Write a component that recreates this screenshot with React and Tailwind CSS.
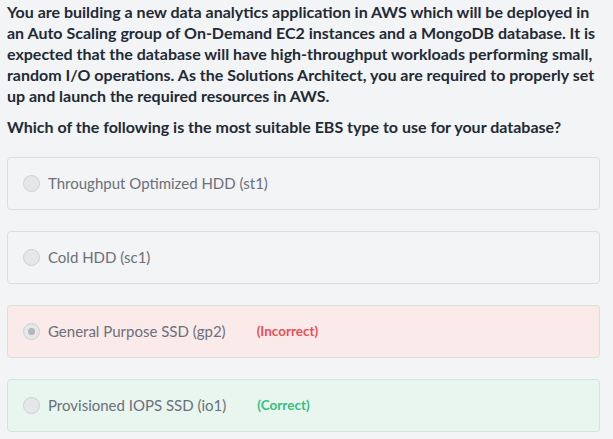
import React from "react";

const options = [
  { label: "Throughput Optimized HDD (st1)", status: null, selected: false },
  { label: "Cold HDD (sc1)", status: null, selected: false },
  { label: "General Purpose SSD (gp2)", status: "incorrect", selected: true },
  { label: "Provisioned IOPS SSD (io1)", status: "correct", selected: false },
];

const Option = ({ option }) => {
  const cardColor =
    option.status === "incorrect"
      ? "bg-[#faeaea]"
      : option.status === "correct"
      ? "bg-[#e8f6ef]"
      : "bg-[#f3f4f6]";

  return (
    <div
      className={`h-[53px] rounded-[4px] border border-[#dcdee2] ${cardColor} flex items-center pl-[15px]`}
    >
      <div className="w-[17px] h-[17px] rounded-full border border-[#cdd0d4] bg-[#e6e7e9] flex items-center justify-center">
        {option.selected && (
          <div className="w-[7px] h-[7px] rounded-full bg-[#b3b6bb]" />
        )}
      </div>
      <span className="ml-[8px] text-[15px] text-[#6b7079]">{option.label}</span>
      {option.status === "incorrect" && (
        <span className="ml-[31px] text-[13.5px] font-bold text-[#ea4f55]">
          (Incorrect)
        </span>
      )}
      {option.status === "correct" && (
        <span className="ml-[31px] text-[13.5px] font-bold text-[#34c07f]">
          (Correct)
        </span>
      )}
    </div>
  );
};

export default function App() {
  return (
    <div
      className="w-[613px] h-[439px] bg-[#f3f4f6] overflow-hidden px-[7px] pt-[1px]"
      style={{ fontFamily: "Lato, 'Open Sans', sans-serif" }}
    >
      {/* Question */}
      <p className="text-[16px] leading-[21px] font-bold text-[#222a36] w-[590px]">
        You are building a new data analytics application in AWS which will be
        deployed in an Auto Scaling group of On-Demand EC2 instances and a
        MongoDB database. It is expected that the database will have
        high-throughput workloads performing small, random I/O operations. As
        the Solutions Architect, you are required to properly set up and launch
        the required resources in AWS.
      </p>
      <p className="mt-[10px] text-[16px] leading-[21px] font-bold text-[#222a36]">
        Which of the following is the most suitable EBS type to use for your
        database?
      </p>

      {/* Choices */}
      <div className="mt-[20px] w-[593px] flex flex-col gap-[21px]">
        {options.map((o) => (
          <Option key={o.label} option={o} />
        ))}
      </div>
    </div>
  );
}
